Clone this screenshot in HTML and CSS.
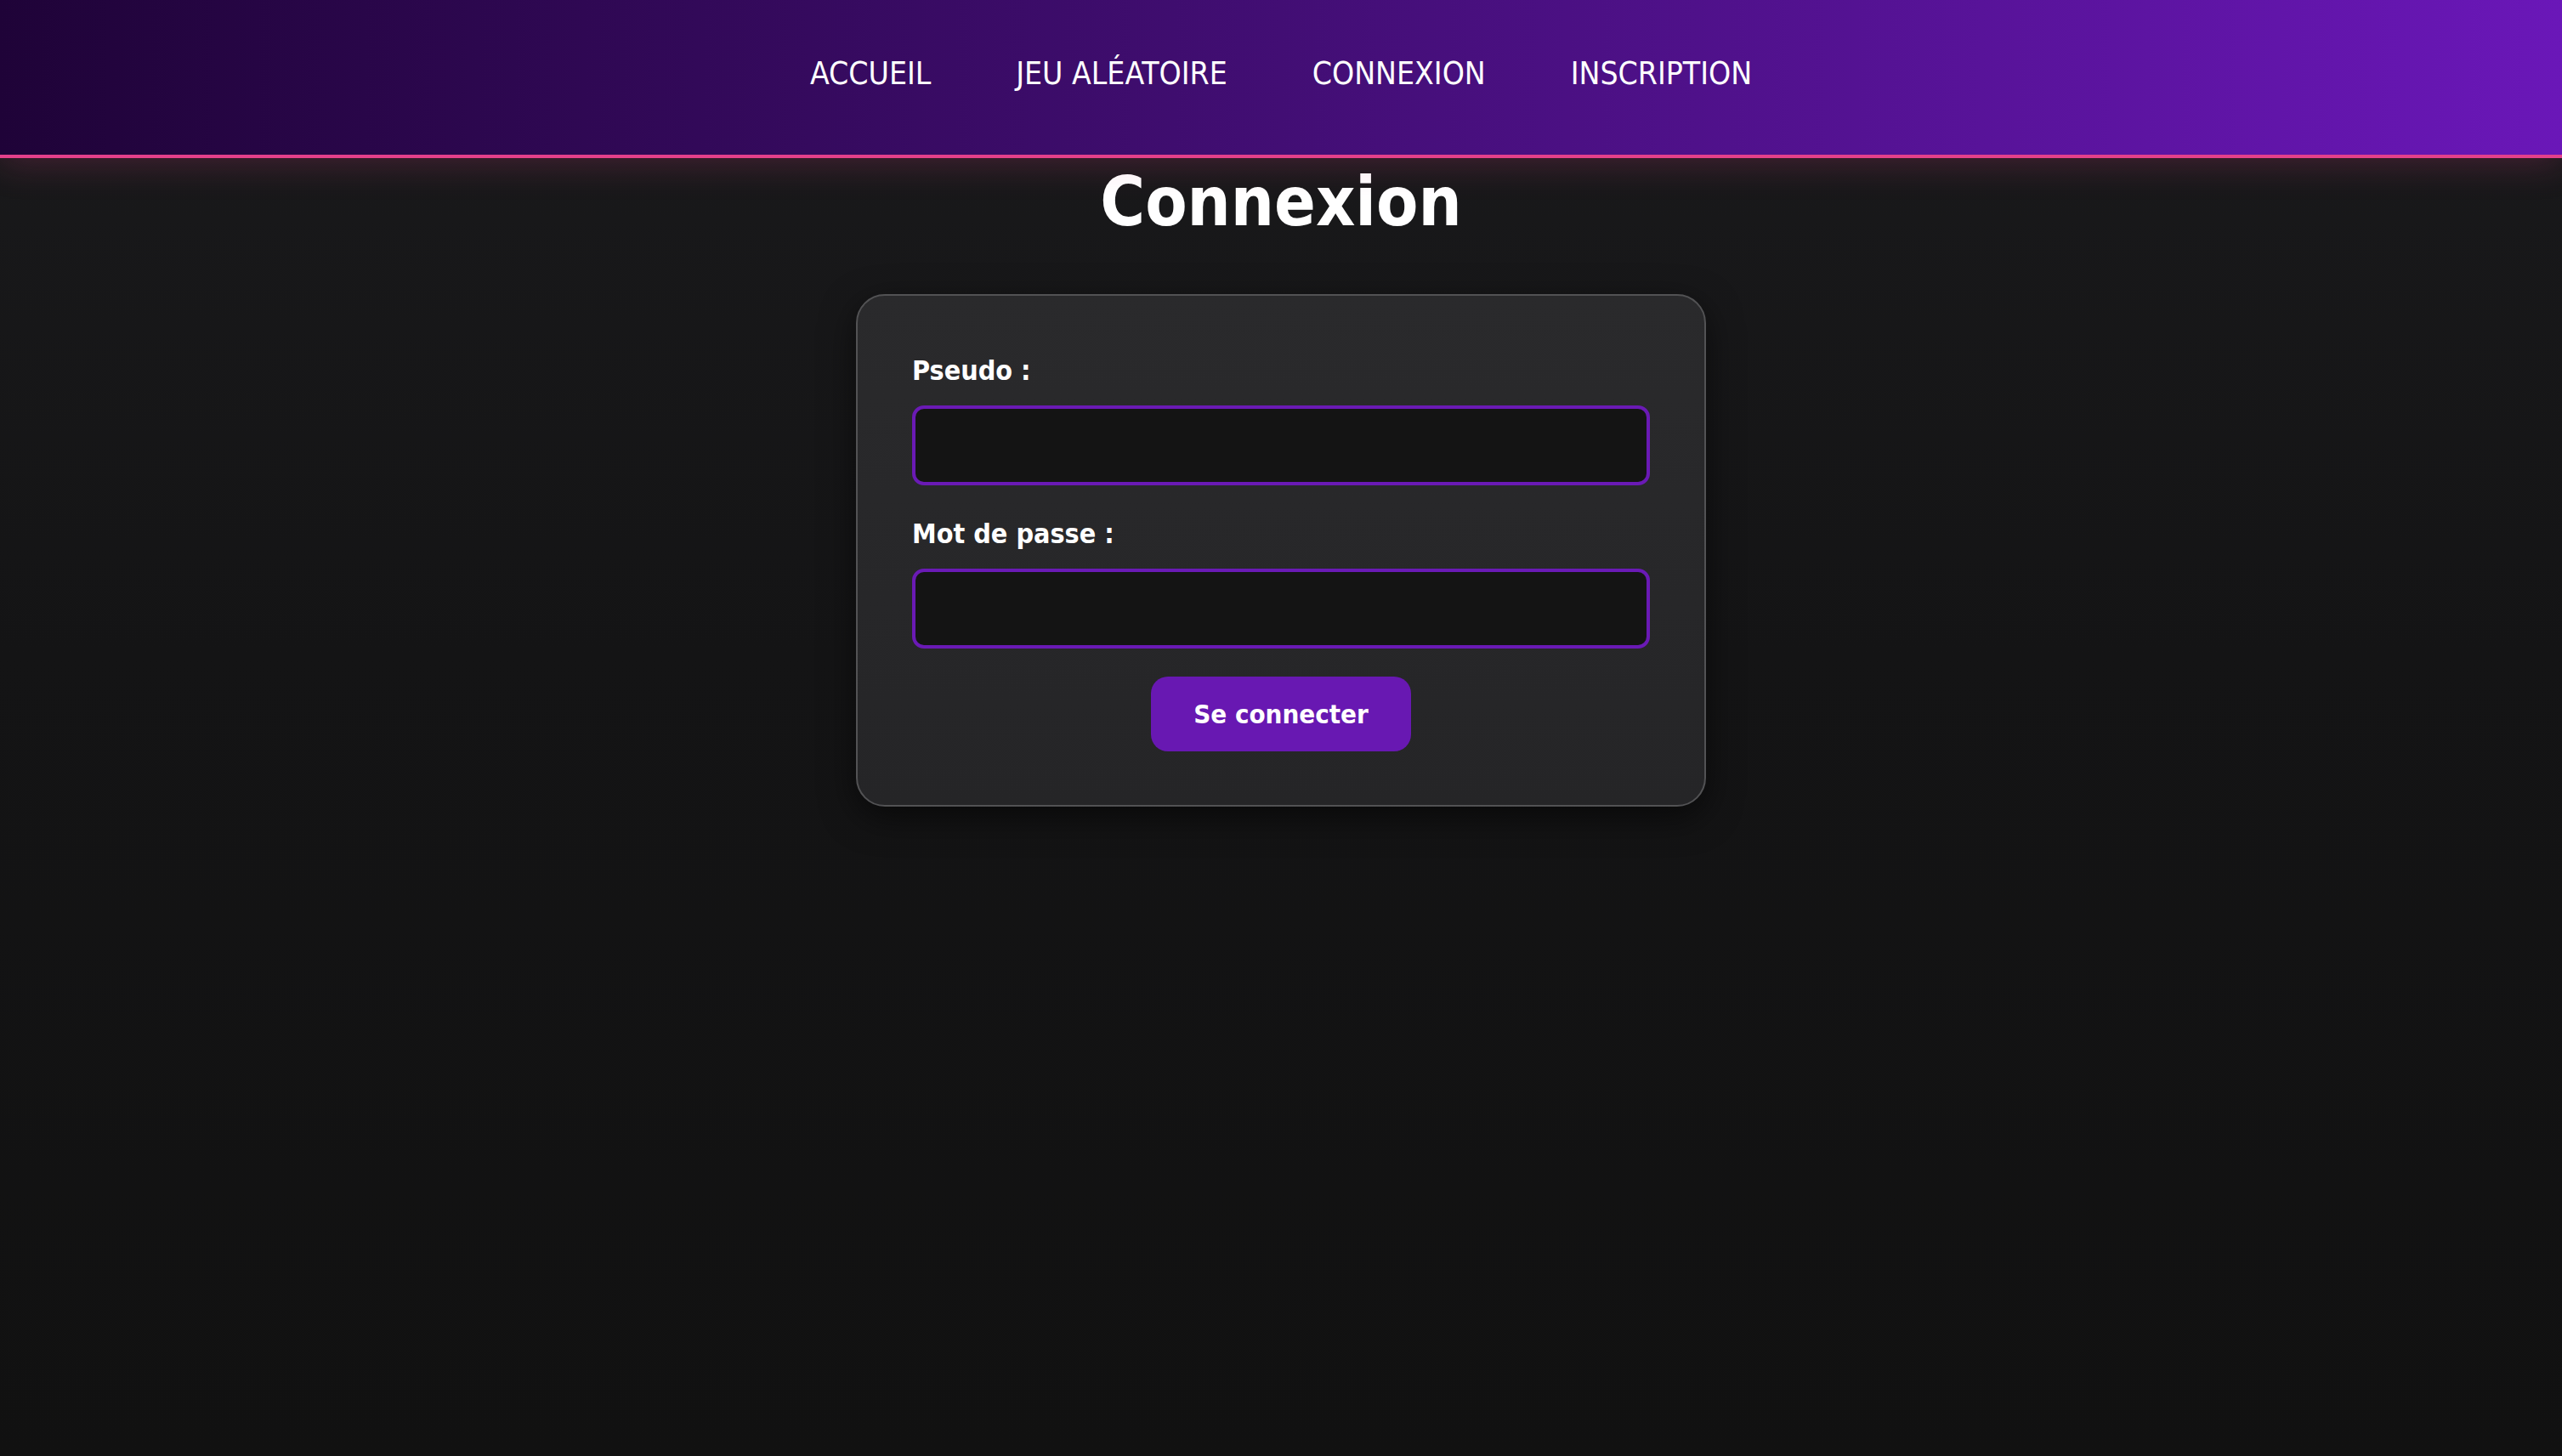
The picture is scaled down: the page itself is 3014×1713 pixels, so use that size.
FILE: index.html
```html
<!DOCTYPE html>
<html lang="fr">
<head>
<meta charset="utf-8">
<title>Connexion</title>
<link rel="stylesheet" href="styles.css">
</head>
<body>
<header class="site-header">
  <nav class="main-nav">
    <a class="nav-link" href="#">ACCUEIL</a>
    <a class="nav-link" href="#">JEU ALÉATOIRE</a>
    <a class="nav-link" href="#">CONNEXION</a>
    <a class="nav-link" href="#">INSCRIPTION</a>
  </nav>
</header>
<main class="page">
  <h1 class="page-title">Connexion</h1>
  <form class="card">
    <div class="field">
      <label class="field-label" for="pseudo">Pseudo :</label>
      <input class="field-input" id="pseudo" type="text">
    </div>
    <div class="field">
      <label class="field-label" for="mdp">Mot de passe :</label>
      <input class="field-input" id="mdp" type="password">
    </div>
    <button class="submit" type="button">Se connecter</button>
  </form>
</main>
</body>
</html>
```

FILE: styles.css
```css
html, body {
  margin: 0;
  padding: 0;
}

body {
  min-height: 1713px;
  font-family: "DejaVu Sans Condensed", "DejaVu Sans", sans-serif;
  font-stretch: condensed;
  color: #ffffff;
  background: linear-gradient(180deg, #1a1a1c 0%, #141415 45%, #111111 100%);
}

.site-header {
  position: relative;
  z-index: 2;
  box-sizing: border-box;
  height: 186px;
  padding-bottom: 10px;
  display: flex;
  align-items: center;
  justify-content: center;
  background: linear-gradient(90deg, #1f0338 0%, #420e74 50%, #6a17b8 100%);
  border-bottom: 4px solid #e4408b;
  box-shadow: 0 6px 40px rgba(228, 64, 139, 0.22);
}

.main-nav {
  display: flex;
  gap: 100px;
  align-items: center;
}

.nav-link {
  color: #ffffff;
  text-decoration: none;
  font-size: 37px;
  line-height: 43px;
}

.page {
  display: flex;
  flex-direction: column;
  align-items: center;
}

.page-title {
  margin: 5px 0 0;
  font-size: 80px;
  line-height: 93px;
  font-weight: bold;
  color: #ffffff;
}

.card {
  box-sizing: border-box;
  width: 1000px;
  margin-top: 62px;
  padding: 70px 64px 63px;
  display: flex;
  flex-direction: column;
  align-items: stretch;
  background: linear-gradient(180deg, #2a2a2c 0%, #252527 100%);
  border: 2px solid #525254;
  border-radius: 34px;
  box-shadow: 0 12px 40px rgba(0, 0, 0, 0.55);
}

.field {
  display: flex;
  flex-direction: column;
  gap: 23px;
  margin-bottom: 39px;
}

.field:nth-of-type(2) {
  margin-bottom: 33px;
}

.field-label {
  font-size: 32px;
  line-height: 36px;
  font-weight: bold;
  color: #ffffff;
}

.field-input {
  box-sizing: border-box;
  height: 94px;
  width: 100%;
  margin: 0;
  padding: 0 20px;
  background: #141414;
  border: 4px solid #6a1ab5;
  border-radius: 14px;
  color: #ffffff;
  font-size: 31px;
  outline: none;
}

.submit {
  align-self: center;
  box-sizing: border-box;
  height: 88px;
  padding: 0 50px;
  background: #6818b2;
  border: none;
  border-radius: 20px;
  color: #ffffff;
  font-family: "DejaVu Sans Condensed", "DejaVu Sans", sans-serif;
  font-stretch: condensed;
  font-size: 31px;
  font-weight: bold;
  line-height: 36px;
  cursor: pointer;
}
```
